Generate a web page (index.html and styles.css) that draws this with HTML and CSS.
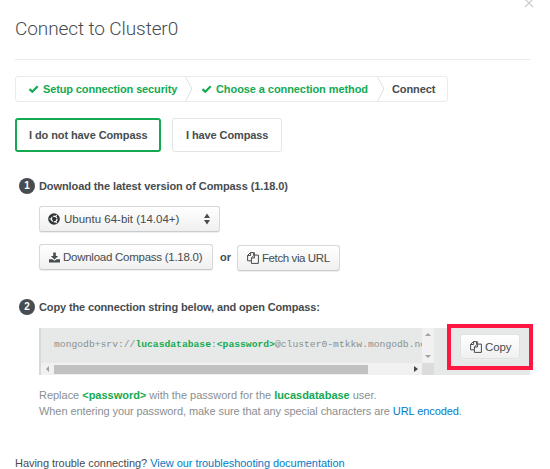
FILE: index.html
```html
<!DOCTYPE html>
<html lang="en">
<head>
<meta charset="utf-8">
<title>Connect to Cluster0</title>
<link rel="stylesheet" href="styles.css">
</head>
<body>
<svg class="defs" width="0" height="0">
  <symbol id="check" viewBox="0 0 10 8"><path d="M1 4.1 3.8 6.7 9.2 1.2" fill="none" stroke="currentColor" stroke-width="2.2"/></symbol>
  <symbol id="copy" viewBox="0 0 12 12"><path d="M4.3 8.8H.6V3.4L3.4.6h3.2v2.6M3.6.6v2.9H.6M4.4 5.9 7.2 3.1h4.2v8.3h-7zM7.4 3.1V6h-3M6.6.6h.7v2.4" fill="none" stroke="currentColor" stroke-width="1"/></symbol>
</svg>
<main class="modal">
  <svg class="close" viewBox="0 0 10 10"><path d="m1 1 8 8m0-8-8 8" fill="none" stroke="currentColor" stroke-width="1.2"/></svg>
  <header class="header"><h1 class="title">Connect to Cluster0</h1></header>
  <nav class="steps">
    <div class="step step-security"><svg class="check"><use href="#check"/></svg><span class="t-security">Setup connection security</span></div>
    <svg class="chevron" viewBox="0 0 8 25"><path d="M.5 0 7 12.5.5 25" fill="none" stroke="currentColor"/></svg>
    <div class="step step-method"><svg class="check"><use href="#check"/></svg><span class="t-method">Choose a connection method</span></div>
    <svg class="chevron" viewBox="0 0 8 25"><path d="M.5 0 7 12.5.5 25" fill="none" stroke="currentColor"/></svg>
    <div class="step step-current"><span class="t-connect">Connect</span></div>
  </nav>
  <div class="choices">
    <button class="choice choice-active"><span class="t-without">I do not have Compass</span></button>
    <button class="choice choice-other"><span class="t-with">I have Compass</span></button>
  </div>
  <h2 class="heading heading-download"><span class="badge">1</span><span class="t-download">Download the latest version of Compass (1.18.0)</span></h2>
  <div class="button select">
    <svg class="ubuntu" viewBox="0 0 12 12"><circle cx="6" cy="6" r="5.8" fill="#303538"/><circle cx="6.2" cy="6" r="2.8" fill="none" stroke="#fff" stroke-width="1.2" stroke-dasharray="4.8 1.05"/><circle cx="2.2" cy="6" r=".7" fill="#fff"/><circle cx="8.3" cy="2.5" r=".7" fill="#fff"/><circle cx="8.3" cy="9.5" r=".7" fill="#fff"/></svg>
    <span class="t-ubuntu">Ubuntu 64-bit (14.04+)</span>
    <svg class="sort" viewBox="0 0 6 12"><path d="M0 5 3 .5 6 5zM0 7h6L3 11.5z" fill="#464c4f"/></svg>
  </div>
  <div class="downloads">
    <button class="button download"><svg class="arrow" viewBox="0 0 11 11"><path d="M4.2.5h2.6V4h2.4L5.5 7.6 1.8 4h2.4z" fill="#464c4f"/><path d="M0 7.2h3.3l2.2 1.5 2.2-1.5H11v3.2H0z" fill="#464c4f"/></svg><span class="t-compass">Download Compass (1.18.0)</span></button>
    <span class="or">or</span>
    <button class="button fetch"><svg class="copy-icon"><use href="#copy"/></svg><span class="t-fetch">Fetch via URL</span></button>
  </div>
  <h2 class="heading heading-copy"><span class="badge">2</span><span class="t-copy-heading">Copy the connection string below, and open Compass:</span></h2>
  <section class="connection">
    <div class="code-scroller">
      <div class="code"><code class="code-text">mongodb+srv://<b>lucasdatabase</b>:<b>&lt;password&gt;</b>@cluster0-mtkkw.mongodb.ne</code></div>
      <div class="vbar"><i class="up"></i><i class="down"></i></div>
      <div class="hbar"><i class="left"></i><i class="thumb"></i><i class="right"></i></div>
      <div class="corner"></div>
    </div>
    <div class="highlight"><button class="button copy"><svg class="copy-icon"><use href="#copy"/></svg><span class="t-copy">Copy</span></button></div>
  </section>
  <div class="notes">
    <p class="note"><span class="t-replace">Replace <b>&lt;password&gt;</b> with the password for the <b>lucasdatabase</b> user.</span></p>
    <p class="note"><span class="t-special">When entering your password, make sure that any special characters are <a>URL encoded</a>.</span></p>
  </div>
  <footer class="footer"><span class="t-footer">Having trouble connecting? <a>View our troubleshooting documentation</a></span></footer>
</main>
</body>
</html>
```
FILE: styles.css
```css
* { box-sizing: border-box; }
body { margin: 0; background: #fff; color: #464c4f; font: 11px/16px "Liberation Sans", Arial, sans-serif; overflow: hidden; }
button { font: inherit; color: inherit; padding: 0; }
h1, h2, p { margin: 0; }
span, code { white-space: nowrap; }
svg { flex: none; }
.defs { position: absolute; }
.modal { position: relative; height: 469px; padding: 0 20px 0 15px; overflow: hidden; }
.close { position: absolute; left: 524px; top: -2px; width: 10px; height: 10px; color: #ccc; }
.header { height: 60px; border-bottom: 1px solid #e8eaea; padding-top: 17px; }
.title { font: 300 19px/24px Roboto, "Liberation Sans", sans-serif; letter-spacing: -.1px; }

.steps { display: flex; width: 433px; height: 26px; margin-top: 16px; border: 1px solid #eaebeb; border-radius: 3px; font-weight: bold; }
.step { display: flex; align-items: center; color: #13aa52; }
.step-security { width: 169px; padding-left: 12px; }
.step-method { width: 184px; padding-left: 8px; }
.step-current { color: #464c4f; padding-left: 7px; }
.check { width: 11px; height: 8px; margin-right: 4px; }
.chevron { width: 8px; height: 24px; color: #dfe1e1; }
.t-security { letter-spacing: -.13px; }
.t-method { letter-spacing: -.08px; }
.t-connect { letter-spacing: -.1px; }

.choices { display: flex; gap: 11px; margin-top: 16px; }
.choice { height: 34px; background: #fff; border: 1px solid #e2e5e5; border-radius: 3px; font-weight: bold; text-align: left; }
.choice-active { width: 146px; border: 2px solid #13aa52; padding-left: 12px; letter-spacing: -.09px; }
.choice-other { width: 110px; padding-left: 13px; letter-spacing: -.1px; }

.heading { display: flex; align-items: center; gap: 4px; height: 16px; margin-left: 4px; font: bold 11px/16px "Liberation Sans", sans-serif; }
.heading-download { margin-top: 26px; letter-spacing: -.09px; }
.heading-copy { margin-top: 29px; letter-spacing: -.13px; }
.badge { width: 16px; height: 16px; border-radius: 50%; background: #464c4f; color: #fff; text-align: center; font-size: 10px; }

.button { display: flex; align-items: center; height: 26px; border: 1px solid #d5d9d9; border-bottom-color: #c8cccc; border-radius: 3px; background: linear-gradient(#fff, #f0f0f0); box-shadow: 0 1px 1px #eee; font-size: 11.5px; }
.select { width: 181px; margin: 12px 0 0 24px; padding-left: 8px; }
.ubuntu { width: 12px; height: 12px; margin-right: 4px; }
.sort { width: 6px; height: 12px; margin: 0 9px 0 auto; }
.downloads { display: flex; align-items: center; margin: 12px 0 0 24px; height: 26px; }
.download { width: 174px; padding-left: 9px; letter-spacing: -.26px; }
.arrow { width: 11px; height: 11px; margin-right: 3px; }
.or { width: 24px; padding-left: 7px; font-weight: bold; }
.fetch { width: 103px; margin-top: 2px; padding-left: 9px; letter-spacing: -.4px; }
.copy-icon { width: 12px; height: 12px; margin-right: 3px; }

.connection { display: flex; height: 47px; margin: 13px 0 0 24px; background: #e7e9e8; border-left: 2px solid #d3dad8; }
.code-scroller { display: grid; grid-template: 35px 12px / 381px 12px; width: 393px; }
.code { overflow: hidden; padding: 9px 0 0 13px; color: #88908f; }
.code-text { display: block; font: 9.7px/16px "Liberation Mono", monospace; }
b { color: #13aa52; }
.vbar, .hbar { display: flex; align-items: center; background: #f1f1f1; }
.vbar { flex-direction: column; justify-content: space-between; padding: 5px 0; }
.corner { background: #dcdcdc; }
.up, .down { border: 3px solid transparent; border-top-width: 0; border-bottom: 3px solid #a0a0a0; }
.down { border-top: 3px solid #a0a0a0; border-bottom-width: 0; }
.left, .right { border: 3px solid transparent; border-left-width: 0; border-right: 3px solid #a0a0a0; margin-left: 5px; }
.thumb { width: 314px; height: 9px; margin-left: 5px; background: #c1c1c1; }
.right { margin: 0 4px 0 auto; border-right-width: 0; border-left: 4px solid #464646; }
.highlight { flex: none; width: 86px; height: 46px; margin: -4px 0 0 13px; border: 4px solid #ff1744; padding: 6px 0 0 9px; background: #e7e9e8; }
.copy { width: 60px; height: 25px; padding-left: 9px; border-color: #e0e2e2; letter-spacing: -.15px; }

.notes { margin: 12px 0 0 24px; color: #898f92; }
.note { height: 16px; }
.t-replace { letter-spacing: -.02px; }
.t-special { letter-spacing: -.08px; }
a { color: #007bc7; }
.footer { margin-top: 36px; letter-spacing: -.045px; }
```
